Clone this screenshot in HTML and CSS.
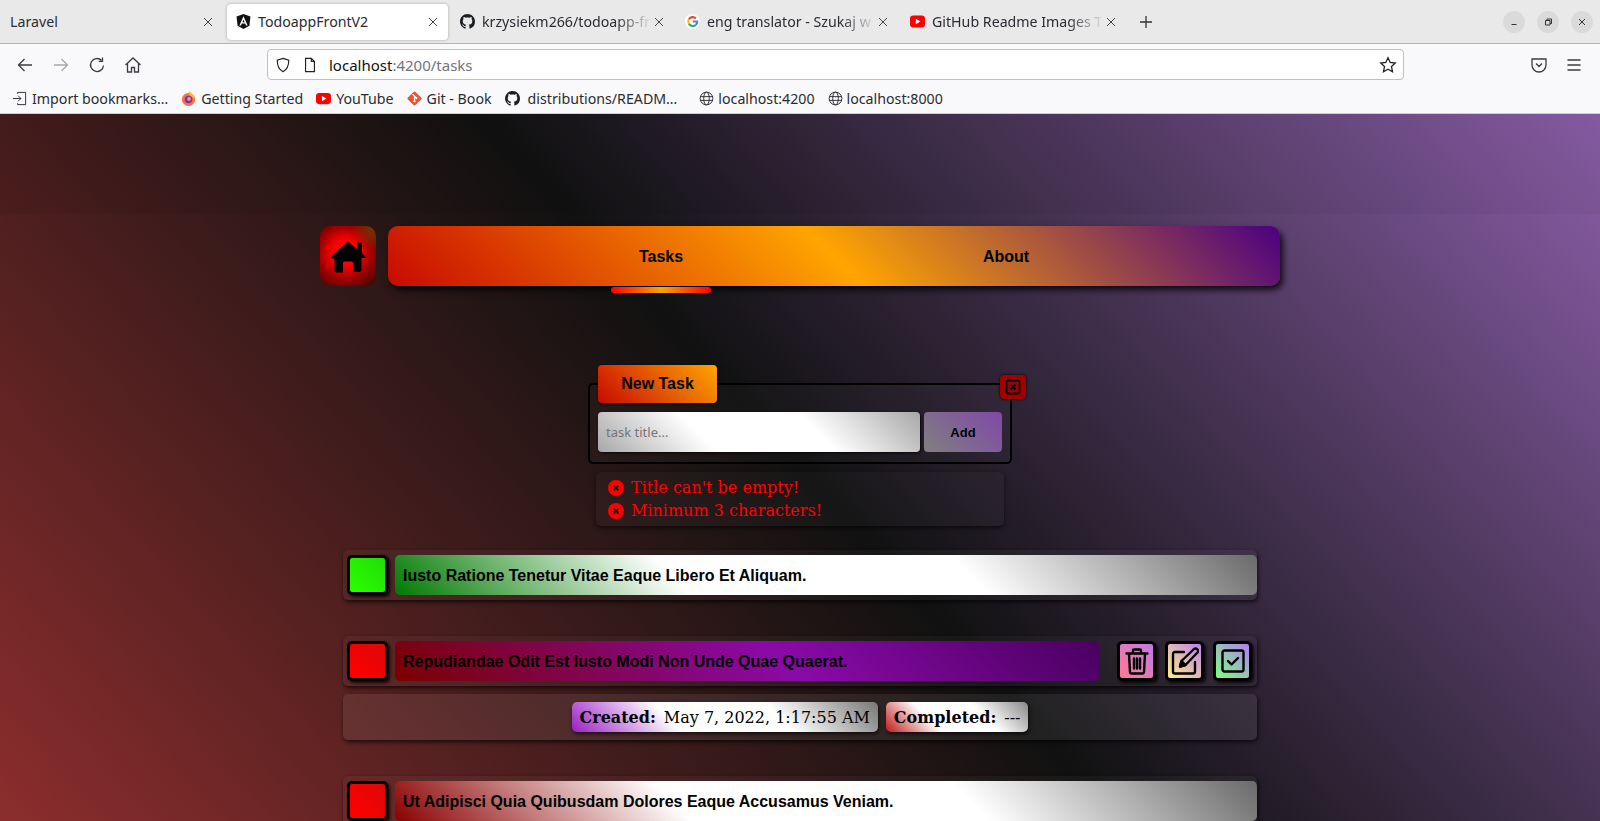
FILE: index.html
```html
<!DOCTYPE html>
<html lang="en">
<head>
    <meta charset="UTF-8">
    <meta name="viewport" content="width=device-width, initial-scale=1.0">
    <title>TodoappFrontV2</title>
    <link rel="stylesheet" href="styles.css">
</head>
<body>

    <!-- browser window -->
    <div class="tabbar">
        <div class="tabs">
            <div class="tab">
                <span class="tab-title">Laravel</span>
                <svg class="tab-close" viewBox="0 0 12 12"><path d="M2 2l8 8M10 2l-8 8"/></svg>
            </div>
            <div class="tab active">
                <svg class="favicon" viewBox="0 0 16 16"><path d="M8 0L.6 2.6l1.1 9.8L8 16l6.3-3.6 1.1-9.8z" fill="#111"/><path d="M8 2.4L3.6 12.2h1.7l.9-2.2h3.6l.9 2.2h1.7zM8 6l1.2 2.8H6.8z" fill="#fff"/></svg>
                <span class="tab-title">TodoappFrontV2</span>
                <svg class="tab-close" viewBox="0 0 12 12"><path d="M2 2l8 8M10 2l-8 8"/></svg>
            </div>
            <div class="tab">
                <svg class="favicon" viewBox="0 0 16 16"><path fill="#1b1f23" d="M8 0C3.58 0 0 3.58 0 8c0 3.54 2.29 6.53 5.47 7.59.4.07.55-.17.55-.38 0-.19-.01-.82-.01-1.49-2.01.37-2.53-.49-2.69-.94-.09-.23-.48-.94-.82-1.13-.28-.15-.68-.52-.01-.53.63-.01 1.08.58 1.23.82.72 1.21 1.87.87 2.33.66.07-.52.28-.87.51-1.07-1.78-.2-3.64-.89-3.64-3.95 0-.87.31-1.59.82-2.15-.08-.2-.36-1.02.08-2.12 0 0 .67-.21 2.2.82.64-.18 1.32-.27 2-.27.68 0 1.36.09 2 .27 1.53-1.04 2.2-.82 2.2-.82.44 1.1.16 1.92.08 2.12.51.56.82 1.27.82 2.15 0 3.07-1.87 3.75-3.65 3.95.29.25.54.73.54 1.48 0 1.07-.01 1.93-.01 2.2 0 .21.15.46.55.38A8.013 8.013 0 0016 8c0-4.42-3.58-8-8-8z"/></svg>
                <span class="tab-title fade">krzysiekm266/todoapp-fr</span>
                <svg class="tab-close" viewBox="0 0 12 12"><path d="M2 2l8 8M10 2l-8 8"/></svg>
            </div>
            <div class="tab">
                <svg class="favicon" viewBox="0 0 16 16"><circle cx="8" cy="8" r="8" fill="#fff"/><g fill="none" stroke-width="2.2"><path d="M11.6 4.7A5 5 0 0 0 4.1 5.4" stroke="#ea4335"/><path d="M4.1 5.4a5 5 0 0 0 0 5.2" stroke="#fbbc05"/><path d="M4.1 10.6a5 5 0 0 0 7.6.9" stroke="#34a853"/><path d="M11.7 11.5A5 5 0 0 0 13 8H8.2" stroke="#4285f4"/></g></svg>
                <span class="tab-title fade">eng translator - Szukaj w</span>
                <svg class="tab-close" viewBox="0 0 12 12"><path d="M2 2l8 8M10 2l-8 8"/></svg>
            </div>
            <div class="tab">
                <svg class="favicon" viewBox="0 0 16 16"><rect y="1.5" width="16" height="13" rx="3.5" fill="#f00"/><path d="M6.2 5v6L11 8z" fill="#fff"/></svg>
                <span class="tab-title fade">GitHub Readme Images T</span>
                <svg class="tab-close" viewBox="0 0 12 12"><path d="M2 2l8 8M10 2l-8 8"/></svg>
            </div>
            <svg class="new-tab" viewBox="0 0 14 14"><path d="M7 1v12M1 7h12"/></svg>
        </div>
        <div class="window-btns">
            <span class="window-btn"><svg viewBox="0 0 10 10"><path d="M2.5 7.5h5"/></svg></span>
            <span class="window-btn"><svg viewBox="0 0 10 10"><path d="M2.5 3.5h4.500v4.500h-4.500zM4 3.500v-1.500h4.500v4.500h-1.500"/></svg></span>
            <span class="window-btn"><svg viewBox="0 0 10 10"><path d="M2 2l6 6M8 2l-6 6"/></svg></span>
        </div>
    </div>

    <div class="toolbar">
        <svg class="tool" viewBox="0 0 18 18"><path d="M16 9H2.500M8.500 3l-6 6 6 6"/></svg>
        <svg class="tool off" viewBox="0 0 18 18"><path d="M2 9h13.500M9.500 3l6 6-6 6"/></svg>
        <svg class="tool" viewBox="0 0 18 18"><path d="M15.500 9.500a6.500 6.500 0 1 1-2-5.200M14.500 1.500v3.800h-3.800"/></svg>
        <svg class="tool" viewBox="0 0 18 18"><path d="M1.500 9L9 2l7.500 7M3.500 7.500V16h4v-4.500h3V16h4V7.500"/></svg>
        <div class="urlbar">
            <svg class="url-icon" viewBox="0 0 18 18"><path d="M9 1.500l6.500 2c0 6-1 10.500-6.500 13-5.500-2.500-6.500-7-6.500-13z"/></svg>
            <svg class="url-icon page" viewBox="0 0 18 18"><path d="M4 1.500h6.500L14 5v11.500H4zM10.500 1.500V5H14"/></svg>
            <span class="url-text">localhost<span class="url-dim">:4200/tasks</span></span>
            <svg class="url-star" viewBox="0 0 18 18"><path d="M9 1.800l2.200 4.700 5.100.6-3.800 3.500 1 5.100L9 13.200l-4.500 2.500 1-5.100-3.800-3.500 5.100-.6z"/></svg>
        </div>
        <svg class="tool pocket" viewBox="0 0 18 18"><path d="M2 3h14v6a7 7 0 0 1-14 0zM6 7.500l3 3 3-3"/></svg>
        <svg class="tool menu" viewBox="0 0 18 18"><path d="M2.500 4h13M2.500 9h13M2.500 14h13"/></svg>
    </div>

    <div class="bookmarks">
        <a class="bookmark">
            <svg class="bm-icon line" viewBox="0 0 16 16"><path d="M6 3V1.500h8.500v13H6V13M1 8h8.500M6.500 5l3 3-3 3"/></svg>
            Import bookmarks…
        </a>
        <a class="bookmark">
            <svg class="bm-icon" viewBox="0 0 16 16"><circle cx="8" cy="9" r="7" fill="#ff7139"/><path d="M8 0c4 2 6 5 6 8L9 4z" fill="#ffbd2e"/><circle cx="8" cy="9" r="4" fill="#7b2fc9"/><circle cx="8.500" cy="8.500" r="2" fill="#ffa436"/></svg>
            Getting Started
        </a>
        <a class="bookmark">
            <svg class="bm-icon" viewBox="0 0 16 16"><rect y="2" width="16" height="12" rx="3.500" fill="#f00"/><path d="M6.300 5.200v5.600L11 8z" fill="#fff"/></svg>
            YouTube
        </a>
        <a class="bookmark">
            <svg class="bm-icon" viewBox="0 0 16 16"><rect x="2.300" y="2.300" width="11.400" height="11.400" rx="1.500" transform="rotate(45 8 8)" fill="#f05133"/><path d="M6 3.500l4 4M8 6v5.500" stroke="#fff" stroke-width="1.300" fill="none"/><circle cx="8" cy="11" r="1.200" fill="#fff"/><circle cx="10" cy="7.500" r="1.200" fill="#fff"/></svg>
            Git - Book
        </a>
        <a class="bookmark wide">
            <svg class="bm-icon" viewBox="0 0 16 16"><path fill="#1b1f23" d="M8 0C3.58 0 0 3.58 0 8c0 3.54 2.29 6.53 5.47 7.59.4.07.55-.17.55-.38 0-.19-.01-.82-.01-1.49-2.01.37-2.53-.49-2.69-.94-.09-.23-.48-.94-.82-1.13-.28-.15-.68-.52-.01-.53.63-.01 1.08.58 1.23.82.72 1.21 1.87.87 2.33.66.07-.52.28-.87.51-1.07-1.78-.2-3.64-.89-3.64-3.95 0-.87.31-1.59.82-2.15-.08-.2-.36-1.02.08-2.12 0 0 .67-.21 2.2.82.64-.18 1.32-.27 2-.27.68 0 1.36.09 2 .27 1.53-1.04 2.2-.82 2.2-.82.44 1.1.16 1.92.08 2.12.51.56.82 1.27.82 2.15 0 3.07-1.87 3.75-3.65 3.95.29.25.54.73.54 1.48 0 1.07-.01 1.93-.01 2.2 0 .21.15.46.55.38A8.013 8.013 0 0016 8c0-4.42-3.58-8-8-8z"/></svg>
            distributions/READM…
        </a>
        <a class="bookmark tight">
            <svg class="bm-icon line" viewBox="0 0 16 16"><circle cx="8" cy="8" r="6.800"/><ellipse cx="8" cy="8" rx="3" ry="6.800"/><path d="M1.500 6h13M1.500 10h13"/></svg>
            localhost:4200
        </a>
        <a class="bookmark tight">
            <svg class="bm-icon line" viewBox="0 0 16 16"><circle cx="8" cy="8" r="6.800"/><ellipse cx="8" cy="8" rx="3" ry="6.800"/><path d="M1.500 6h13M1.500 10h13"/></svg>
            localhost:8000
        </a>
    </div>

    <!-- the app -->
    <div class="app">
        <div class="top-space"></div>

        <header class="nav-row">
            <a class="home-btn">
                <svg viewBox="0 0 36 33"><path d="M18 1.500L27 9V3.500a1 1 0 0 1 1-1h3a1 1 0 0 1 1 1v10l3 2.700a1 1 0 0 1-.7 1.800h-2.800v12a2 2 0 0 1-2 2H23V23a1.500 1.500 0 0 0-1.500-1.500h-7A1.500 1.500 0 0 0 13 23v9.500H6.500a2 2 0 0 1-2-2v-12H1.700a1 1 0 0 1-.7-1.800z"/></svg>
            </a>
            <nav class="nav-bar">
                <a class="nav-link current">Tasks</a>
                <a class="nav-link">About</a>
            </nav>
        </header>

        <section class="new-task">
            <div class="new-task-label">New Task</div>
            <button class="form-close">
                <svg viewBox="0 0 16 16"><rect x="1.500" y="1.500" width="13" height="13" rx="1.500"/><path d="M5.500 5.500l5 5M10.500 5.500l-5 5"/></svg>
            </button>
            <form class="new-task-form">
                <input class="task-input" type="text" placeholder="task title...">
                <button class="add-btn" type="button">Add</button>
            </form>
        </section>

        <ul class="errors">
            <li class="error">
                <svg class="error-icon" viewBox="0 0 16 16"><circle cx="8" cy="8" r="8"/><path d="M5.500 5.500l5 5M10.500 5.500l-5 5"/></svg>
                Title can't be empty!
            </li>
            <li class="error">
                <svg class="error-icon" viewBox="0 0 16 16"><circle cx="8" cy="8" r="8"/><path d="M5.500 5.500l5 5M10.500 5.500l-5 5"/></svg>
                Minimum 3 characters!
            </li>
        </ul>

        <div class="task-list">
            <div class="task">
                <div class="task-row">
                    <span class="check done"></span>
                    <div class="task-title title-done">Iusto Ratione Tenetur Vitae Eaque Libero Et Aliquam.</div>
                </div>
            </div>

            <div class="task">
                <div class="task-row">
                    <span class="check"></span>
                    <div class="task-title title-open">Repudiandae Odit Est Iusto Modi Non Unde Quae Quaerat.</div>
                    <div class="task-actions">
                        <button class="action-btn btn-delete">
                            <svg viewBox="0 0 28 28"><path d="M3.500 6.500h21M10 6.500V3.500a1 1 0 0 1 1-1h6a1 1 0 0 1 1 1v3M6 6.500l1 18.500a1.500 1.500 0 0 0 1.500 1.500h11a1.500 1.500 0 0 0 1.500-1.500l1-18.500M11 11.500v10M14 11.500v10M17 11.500v10"/></svg>
                        </button>
                        <button class="action-btn btn-edit">
                            <svg viewBox="0 0 28 28"><path d="M13 5H4a2 2 0 0 0-2 2v17.500a2 2 0 0 0 2 2h18a2 2 0 0 0 2-2V15"/><path d="M9 19.500l1.500-5.500L23 2a2.500 2.500 0 0 1 3.500 3.500L14.500 18z"/><path class="pencil-tip" d="M9 19.500l1.500-5.500 4 4z"/></svg>
                        </button>
                        <button class="action-btn btn-check">
                            <svg viewBox="0 0 28 28"><rect x="3.500" y="3.500" width="21" height="21" rx="2"/><path d="M9 14l3.500 3.500 6.500-6.500"/></svg>
                        </button>
                    </div>
                </div>
                <div class="task-details">
                    <div class="pill pill-created"><b>Created:</b> May 7, 2022, 1:17:55 AM</div>
                    <div class="pill pill-completed"><b>Completed:</b> ---</div>
                </div>
            </div>

            <div class="task">
                <div class="task-row">
                    <span class="check"></span>
                    <div class="task-title title-late">Ut Adipisci Quia Quibusdam Dolores Eaque Accusamus Veniam.</div>
                </div>
            </div>
        </div>
    </div>

</body>
</html>
```

FILE: styles.css
```css
html, body {
    height: 100%;
}

body {
    margin: 0;
    overflow: hidden;
    display: flex;
    flex-direction: column;
    font-family: 'Liberation Sans', sans-serif;
}

/* browser window */
.tabbar {
    height: 43px;
    display: flex;
    justify-content: space-between;
    background-color: #e9e9e9;
    border-bottom: 1px solid #b4b4b4;
    font-family: 'Noto Sans', sans-serif;
    font-size: 14.2px;
    color: #2b2b33;
}

.tabs {
    display: flex;
    align-items: center;
    gap: 4px;
    padding-left: 2px;
}

.tab {
    width: 221px;
    height: 36px;
    box-sizing: border-box;
    padding: 0 9px 0 8px;
    display: flex;
    align-items: center;
    border-radius: 4px;
}

.tab.active {
    padding-left: 9px;
    background-color: #fff;
    box-shadow: 0 0 3px rgba(0, 0, 0, 0.3);
}

.favicon {
    width: 15px;
    height: 15px;
    margin-right: 7px;
    flex-shrink: 0;
}

.tab-title {
    flex: 1;
    white-space: nowrap;
}

.tab-title.fade {
    -webkit-mask-image: linear-gradient(to right, #000 80%, transparent 101%);
    mask-image: linear-gradient(to right, #000 80%, transparent 101%);
}

.tab-close {
    width: 12px;
    height: 12px;
    margin-left: 3px;
    flex-shrink: 0;
    fill: none;
    stroke: #444;
    stroke-width: 1;
}

.new-tab {
    width: 14px;
    height: 14px;
    margin-left: 12px;
    fill: none;
    stroke: #333;
    stroke-width: 1.300;
}

.window-btns {
    display: flex;
    align-items: center;
    gap: 12px;
    padding-right: 7px;
}

.window-btn {
    width: 22px;
    height: 22px;
    border-radius: 50%;
    background-color: #dadada;
    display: flex;
    align-items: center;
    justify-content: center;
}

.window-btn svg {
    width: 10px;
    height: 10px;
    fill: none;
    stroke: #333;
    stroke-width: 1;
}

.toolbar {
    height: 41px;
    display: flex;
    align-items: center;
    padding: 0 16px;
    background-color: #f9f9fb;
    box-sizing: border-box;
}

.tool {
    width: 18px;
    height: 18px;
    margin-right: 18px;
    flex-shrink: 0;
    fill: none;
    stroke: #3b3b42;
    stroke-width: 1.300;
}

.tool.off {
    stroke: #a8a8ac;
}

.urlbar {
    width: 1137px;
    height: 31px;
    margin-left: 107px;
    flex-shrink: 0;
    box-sizing: border-box;
    display: flex;
    align-items: center;
    padding: 0 6px 0 7px;
    background-color: #fff;
    border: 1px solid #c0c0c4;
    border-radius: 4px;
    font-family: 'Noto Sans', sans-serif;
    font-size: 15px;
    color: #111;
}

.url-icon {
    width: 16px;
    height: 18px;
    margin-right: 11px;
    fill: none;
    stroke: #222;
    stroke-width: 1.300;
}

.url-icon.page {
    margin-right: 11px;
}

.url-text {
    flex: 1;
}

.url-dim {
    color: #73737a;
}

.url-star {
    width: 18px;
    height: 18px;
    fill: none;
    stroke: #222;
    stroke-width: 1.300;
}

.pocket {
    margin-left: 126px;
    margin-right: 17px;
}

.menu {
    margin-right: 0;
}

.bookmarks {
    height: 29px;
    box-sizing: border-box;
    display: flex;
    align-items: center;
    padding: 0 0 1px 12px;
    background-color: #f9f9fb;
    border-bottom: 1px solid #cfcfd3;
    font-family: 'Noto Sans', sans-serif;
    font-size: 14.2px;
    color: #2b2b33;
    gap: 13px;
}

.bookmark {
    display: flex;
    align-items: center;
    gap: 5px;
    white-space: nowrap;
}

.bookmark.wide {
    gap: 8px;
    margin-right: 9px;
}

.bookmark.tight {
    gap: 4px;
}

.bm-icon {
    width: 15px;
    height: 15px;
}

.bm-icon.line {
    fill: none;
    stroke: #2b2b33;
    stroke-width: 1;
}

/* the app */
.app {
    flex: 1;
    overflow: hidden;
    background: linear-gradient(48deg, #8c2d2d 0%, #111 50%, #8a5ea8 100%);
}

.top-space {
    height: 100px;
    background-color: rgba(0, 0, 0, 0.04);
}

.nav-row {
    width: 960px;
    height: 60px;
    margin: 12px auto 0 auto;
    display: flex;
    gap: 12px;
}

.home-btn {
    width: 56px;
    border-radius: 10px;
    display: flex;
    align-items: center;
    justify-content: center;
    background:
        radial-gradient(circle at 100% 0, rgba(120, 80, 0, 0.8), transparent 30%),
        radial-gradient(circle at 45% 45%, #ff0000 28%, #a00000 58%, #400800 92%);
}

.home-btn svg {
    width: 36px;
    height: 33px;
    fill: #000;
}

.nav-bar {
    flex: 1;
    display: flex;
    align-items: center;
    padding-left: 223px;
    gap: 245px;
    border-radius: 10px;
    background: linear-gradient(45deg, #c80a00, #ffa500, #4b0082);
    box-shadow: 3px 4px 6px rgba(0, 0, 0, 0.8);
}

.nav-link {
    width: 100px;
    position: relative;
    padding-top: 1px;
    text-align: center;
    font-size: 16px;
    font-weight: bold;
    color: #000;
}

.nav-link.current::after {
    content: "";
    position: absolute;
    left: 0;
    right: 0;
    top: 40px;
    height: 6px;
    border-radius: 3px;
    background: linear-gradient(to right, #ff0000, #ffa500, #ff0000);
}

.new-task {
    width: 424px;
    margin: 79px auto 0 auto;
    position: relative;
}

.new-task-label {
    width: 119px;
    height: 38px;
    box-sizing: border-box;
    margin: 0 0 -20px 10px;
    position: relative;
    display: flex;
    align-items: center;
    justify-content: center;
    border-radius: 4px;
    background: linear-gradient(45deg, #c80a00, #ffa500);
    box-shadow: 1px 1px 3px rgba(0, 0, 0, 0.9);
    font-size: 16px;
    font-weight: bold;
    color: #000;
}

.form-close {
    position: absolute;
    top: 10px;
    right: -14px;
    width: 26px;
    height: 24px;
    padding: 0;
    border: none;
    border-radius: 4px;
    background-color: #a00000;
    box-shadow: 0 0 3px #000;
    z-index: 1;
}

.form-close svg {
    width: 16px;
    height: 16px;
    display: block;
    margin: auto;
    fill: none;
    stroke: #000;
    stroke-width: 1.800;
}

.new-task-form {
    height: 81px;
    box-sizing: border-box;
    padding: 27px 8px 0 8px;
    display: flex;
    gap: 4px;
    align-items: flex-start;
    border: 2px solid #000;
    border-radius: 5px;
    background-color: rgba(255, 255, 255, 0.02);
}

.task-input {
    width: 322px;
    height: 40px;
    box-sizing: border-box;
    padding: 0 8px;
    border: none;
    border-radius: 4px;
    background: linear-gradient(45deg, #a8a8a8, #fff 33%, #fff 66%, #a8a8a8);
    box-shadow: 1px 1px 3px rgba(0, 0, 0, 0.8);
    font-family: 'Noto Sans', sans-serif;
    font-size: 13px;
}

.task-input::placeholder {
    color: #757575;
}

.add-btn {
    width: 78px;
    height: 40px;
    border: none;
    border-radius: 4px;
    background: linear-gradient(45deg, #808080, #8048a8);
    font-family: 'Liberation Sans', sans-serif;
    font-size: 13px;
    font-weight: bold;
    color: #000;
}

.errors {
    width: 408px;
    height: 54px;
    box-sizing: border-box;
    margin: 8px auto 0 auto;
    padding: 4px 12px;
    list-style: none;
    border-radius: 5px;
    background-color: rgba(255, 255, 255, 0.025);
    box-shadow: 0 2px 4px rgba(0, 0, 0, 0.6);
}

.error {
    height: 23px;
    display: flex;
    align-items: center;
    gap: 7px;
    font-family: 'DejaVu Serif', serif;
    font-size: 16px;
    color: #f00;
}

.error-icon {
    width: 16px;
    height: 16px;
    fill: #f00;
}

.error-icon path {
    stroke: #300;
    stroke-width: 2;
}

.task-list {
    width: 914px;
    margin: 24px auto 0 auto;
}

.task {
    margin-bottom: 36px;
}

.task-row {
    height: 50px;
    box-sizing: border-box;
    padding: 5px 0 5px 4px;
    display: flex;
    gap: 7px;
    border-radius: 5px;
    background-color: rgba(255, 255, 255, 0.03);
    box-shadow: 1px 2px 4px rgba(0, 0, 0, 0.7);
}

.check {
    width: 41px;
    height: 40px;
    box-sizing: border-box;
    flex-shrink: 0;
    border: 3px solid #000;
    border-radius: 5px;
    background: linear-gradient(45deg, #ff0000, #dd0808);
    box-shadow: 2px 2px 3px rgba(0, 0, 0, 0.8);
}

.check.done {
    background: linear-gradient(45deg, #2bff00, #22dd08);
}

.task-title {
    flex: 1;
    display: flex;
    align-items: center;
    padding: 1px 0 0 8px;
    border-radius: 5px;
    font-size: 16px;
    font-weight: bold;
    color: #000;
}

.title-done {
    background: linear-gradient(45deg, #007a00, #fff 33%, #fff 66%, #6a6a6a);
}

.title-open {
    background: linear-gradient(45deg, #7a0000, #8a0aa8 55%, #4a0060);
}

.title-late {
    background: linear-gradient(45deg, #8b0000, #fff 33%, #fff 66%, #6a6a6a);
}

.task-actions {
    display: flex;
    gap: 9px;
    margin-left: 11px;
    padding-right: 5px;
}

.action-btn {
    width: 39px;
    height: 40px;
    padding: 0;
    display: flex;
    align-items: center;
    justify-content: center;
    border: 3px solid #000;
    border-radius: 5px;
    box-shadow: 2px 2px 3px rgba(0, 0, 0, 0.8);
}

.action-btn svg {
    width: 28px;
    height: 28px;
    flex-shrink: 0;
    fill: none;
    stroke: #000;
    stroke-width: 2.400;
    stroke-linecap: round;
    stroke-linejoin: round;
}

.action-btn .pencil-tip {
    fill: #000;
}

.btn-delete {
    background: linear-gradient(45deg, #ff7a90, #c07ae8);
}

.btn-edit {
    background: linear-gradient(45deg, #fff080, #c080f0);
}

.btn-check {
    background: linear-gradient(45deg, #80ff80, #b080f0);
}

.task-details {
    height: 46px;
    margin-top: 8px;
    display: flex;
    align-items: center;
    justify-content: center;
    gap: 8px;
    border-radius: 5px;
    background-color: rgba(255, 255, 255, 0.07);
    box-shadow: 1px 2px 4px rgba(0, 0, 0, 0.7);
}

.pill {
    height: 30px;
    box-sizing: border-box;
    display: flex;
    align-items: center;
    gap: 8px;
    border-radius: 5px;
    font-family: 'DejaVu Serif', serif;
    font-size: 16px;
    color: #000;
    box-shadow: 1px 2px 4px rgba(0, 0, 0, 0.7);
}

.pill-created {
    padding: 0 8px 0 7px;
    background: linear-gradient(45deg, #9a1fc4, #fff 33%, #fff 66%, #777);
}

.pill-completed {
    padding: 0 7px 0 8px;
    background: linear-gradient(45deg, #c01818, #fff 33%, #fff 66%, #888);
}
```
